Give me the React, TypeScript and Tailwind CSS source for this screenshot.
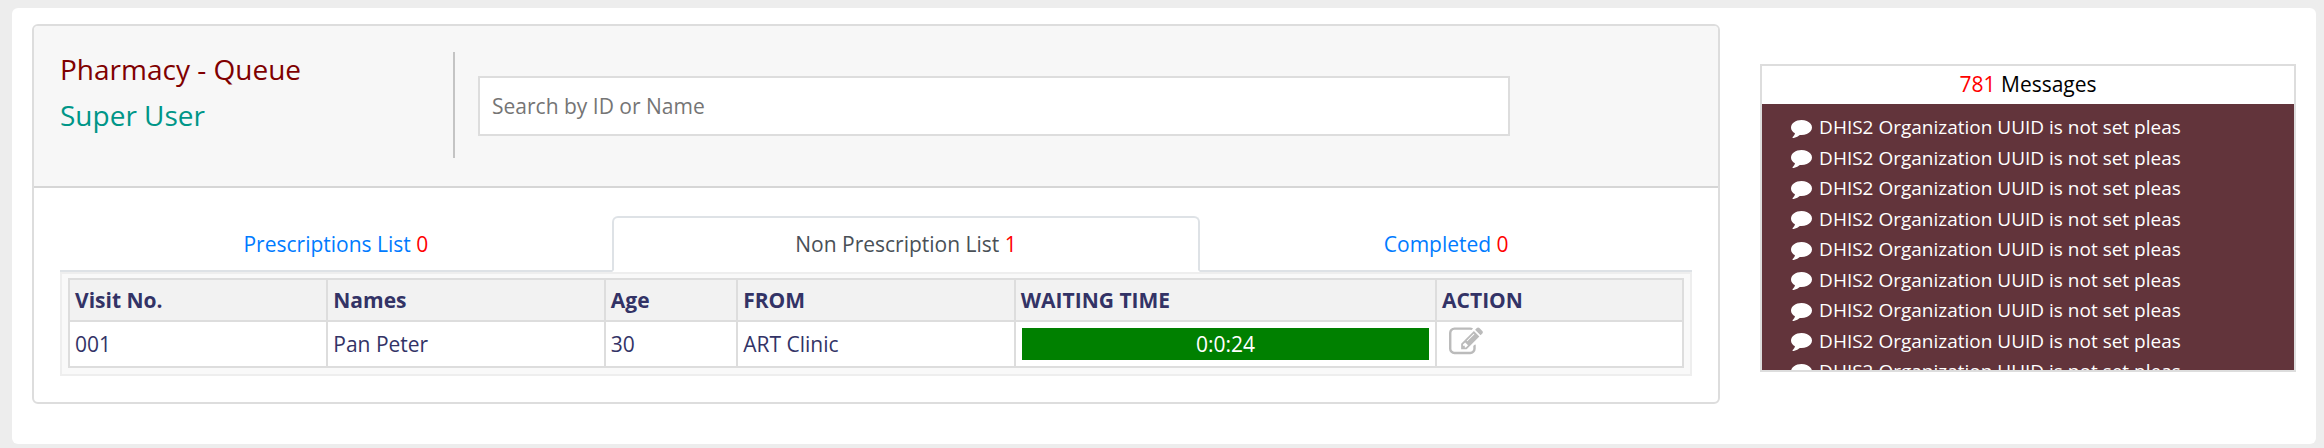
const TABS = [
  { label: "Prescriptions List", count: 0, active: false },
  { label: "Non Prescription List", count: 1, active: true },
  { label: "Completed", count: 0, active: false },
];

const COLUMNS = [
  { title: "Visit No.", width: "w-[16%]" },
  { title: "Names", width: "w-[17.2%]" },
  { title: "Age", width: "w-[8.2%]" },
  { title: "FROM", width: "w-[17.2%]" },
  { title: "WAITING TIME", width: "w-[26.1%]" },
  { title: "ACTION", width: "w-[15.3%]" },
];

const PATIENTS = [{ visit: "001", name: "Pan Peter", age: 30, from: "ART Clinic", waiting: "0:0:24" }];

const MESSAGES = Array.from({ length: 9 }, () => "DHIS2 Organization UUID is not set pleas");

function EditIcon() {
  return (
    <svg viewBox="0 0 1792 1792" className="size-[34px]" fill="currentColor" aria-hidden="true">
      <path d="M888 1184l116-116-152-152-116 116v56h96v96h56zm440-720q-16-16-33 1l-350 350q-17 17-1 33t33-1l350-350q17-17 1-33zm80 594v190q0 119-84.500 203.500t-203.500 84.500h-832q-119 0-203.500-84.500t-84.500-203.500v-832q0-119 84.500-203.500t203.500-84.500h832q63 0 117 25 15 7 18 23 3 17-9 29l-49 49q-14 14-32 8-23-6-45-6h-832q-66 0-113 47t-47 113v832q0 66 47 113t113 47h832q66 0 113-47t47-113v-126q0-13 9-22l64-64q15-15 35-7t20 29zm-96-738l288 288-672 672h-288v-288zm444 132l-92 92-288-288 92-92q28-28 68-28t68 28l152 152q28 28 28 68t-28 68z" />
    </svg>
  );
}

function CommentIcon() {
  return (
    <svg viewBox="0 0 1792 1792" className="size-[21px] shrink-0" fill="currentColor" aria-hidden="true">
      <path d="M1792 896q0 174-120 321.500t-326 233-450 85.500q-70 0-145-8-198 175-460 242-49 14-114 22-17 2-30.500-9t-17.500-29v-1q-3-4-.5-12t2-10 4.500-9.500l6-9 7-8.500 8-9q7-8 31-34.500t34.500-38 31-39.500 32.500-51 27-59 26-76q-157-89-247.500-220t-90.500-281q0-130 71-248.500t191-204.500 286-136.500 348-50.500q244 0 450 85.500t326 233 120 321.500z" />
    </svg>
  );
}

function QueueHeader() {
  return (
    <header className="flex items-start border-b-2 border-[#d6d6d6] bg-[#f7f7f7] pt-[26px] pb-7">
      <div className="flex h-[106px] w-1/4 flex-col gap-3 border-r-2 border-[#c4c4c4] pl-[26px] text-[28px] leading-[34px]">
        <h1 className="text-[#800000]">Pharmacy - Queue</h1>
        <p className="text-[#009688]">Super User</p>
      </div>
      <div className="flex-1 pt-6 pr-52 pl-[23px]">
        <input
          type="text"
          aria-label="Search by ID or Name"
          placeholder="Search by ID or Name"
          className="block h-[60px] w-full border-2 border-[#ddd] bg-white px-3 text-[21px] text-[#333] outline-none placeholder:text-[#757575]"
        />
      </div>
    </header>
  );
}

function Tabs() {
  return (
    <div role="tablist" className="flex border-b-2 border-[#dee2e6]">
      {TABS.map((tab) => (
        <button
          key={tab.label}
          type="button"
          role="tab"
          aria-selected={tab.active}
          className={
            tab.active
              ? "-mb-[2px] h-14 flex-auto rounded-t-md border-2 border-[#dee2e6] border-b-white bg-white text-[#495057]"
              : "-mb-[2px] h-14 flex-auto border-2 border-transparent text-[#007bff]"
          }
        >
          {tab.label} <span className="text-[#f00]">{tab.count}</span>
        </button>
      ))}
    </div>
  );
}

function QueueTable() {
  return (
    <div className="border-2 border-[#eee] bg-[#f9f9f9] px-[6px] pt-1 pb-[6px]">
      <table className="w-full table-fixed border-collapse text-left text-[#333366]">
        <thead>
          <tr className="h-[42px] bg-[#f2f2f2]">
            {COLUMNS.map((column) => (
              <th key={column.title} className={`border-2 border-[#ddd] px-[5px] font-bold ${column.width}`}>
                {column.title}
              </th>
            ))}
          </tr>
        </thead>
        <tbody>
          {PATIENTS.map((patient) => (
            <tr key={patient.visit} className="h-[46px] bg-white">
              <td className="border-2 border-[#ddd] px-[5px]">{patient.visit}</td>
              <td className="border-2 border-[#ddd] px-[5px]">{patient.name}</td>
              <td className="border-2 border-[#ddd] px-[5px]">{patient.age}</td>
              <td className="border-2 border-[#ddd] px-[5px]">{patient.from}</td>
              <td className="border-2 border-[#ddd] px-[6px]">
                <div className="bg-[#008000] text-center leading-8 text-white">{patient.waiting}</div>
              </td>
              <td className="border-2 border-[#ddd] px-3 align-top">
                <button type="button" aria-label="Edit" className="mt-[3px] block text-[#bbb]">
                  <EditIcon />
                </button>
              </td>
            </tr>
          ))}
        </tbody>
      </table>
    </div>
  );
}

function Messages() {
  return (
    <aside className="mt-10 h-[308px] overflow-hidden border-2 border-[#ddd]">
      <h2 className="pb-[2px] text-center leading-9 text-black">
        <span className="text-[#f00]">781</span> Messages
      </h2>
      <div className="h-[266px] overflow-hidden bg-[#62343b] pt-2 pl-[29px]">
        <ul className="flex h-[274px] flex-col justify-between text-[19px] leading-[30px] text-white">
          {MESSAGES.map((message, index) => (
            <li key={index} className="flex items-center gap-[7px] whitespace-nowrap">
              <CommentIcon />
              {message}
            </li>
          ))}
        </ul>
      </div>
    </aside>
  );
}

export default function App() {
  return (
    <div className="min-h-screen bg-[#ededed] pt-2 pr-2 pb-1 pl-3 font-['Open_Sans',sans-serif] text-[21px] leading-8">
      <main className="grid grid-cols-[3.15fr_1fr] items-start gap-10 rounded-md bg-white px-5 pt-4 pb-10">
        <section className="overflow-hidden rounded-md border-2 border-[#ddd]">
          <QueueHeader />
          <div className="px-[26px] pt-7 pb-[26px]">
            <Tabs />
            <QueueTable />
          </div>
        </section>
        <Messages />
      </main>
    </div>
  );
}
